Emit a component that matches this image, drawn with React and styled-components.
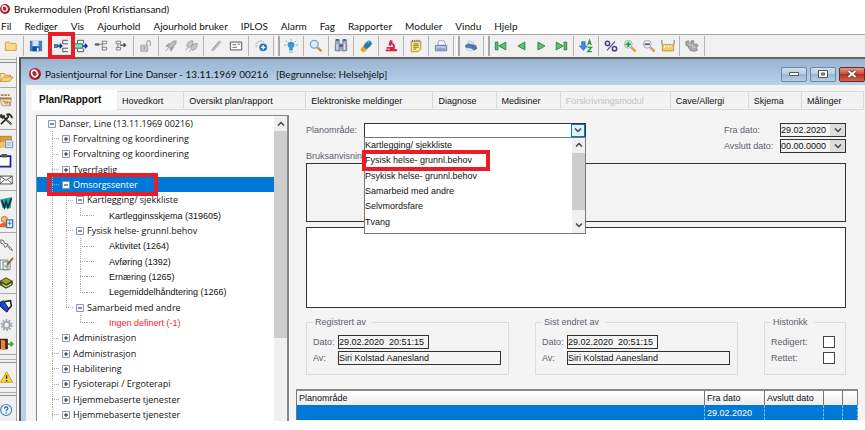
import React from 'react';
import styled, {createGlobalStyle, css} from 'styled-components';

const titleFont = `Lato, 'Open Sans', sans-serif`;
const formFont = `'Liberation Sans', Arial, sans-serif`;
const treeFont = `'Open Sans', 'Noto Sans', sans-serif`;

const GlobalStyle = createGlobalStyle`
  * { box-sizing: border-box; }
  body { margin: 0; background: #fff; font-family: ${formFont}; font-size: 9px; line-height: 14px; color: #111; }
  button, input, select, textarea { font: inherit; color: inherit; margin: 0; padding: 0; border-radius: 0; }
  svg { display: block; flex: none; }
`;

const Page = styled.div`
  display: flex;
  flex-direction: column;
  height: 100vh;
  padding-bottom: 9px;
  overflow: hidden;
`;

const AppTitle = styled.header`
  display: flex;
  align-items: center;
  gap: 4px;
  height: 17px;
  flex: none;
  font: 10px/16px ${titleFont};
`;

const MenuBar = styled.nav`
  display: flex;
  gap: 13px;
  height: 17px;
  flex: none;
  padding-left: 1px;
`;

const MenuItem = styled.button`
  border: 0;
  background: none;
  font: 10px/16px ${titleFont};
  white-space: nowrap;
`;

const ToolBar = styled.div`
  display: flex;
  align-items: center;
  height: 23px;
  flex: none;
  padding-left: 1px;
  background: #f0f0f0;
  border-top: 1px solid #a6a6a6;
`;

const ToolButton = styled.button`
  position: relative;
  display: flex;
  align-items: center;
  justify-content: center;
  width: ${p => (p.$narrow ? 19 : 20)}px;
  height: 20px;
  border: 0;
  background: none;
`;

const ToolSep = styled.span`
  width: 5px;
  height: 20px;
  background: linear-gradient(#b4b4b4, #b4b4b4) 2px 0 / 1px 100% no-repeat;
`;

const ToolGrip = styled.span`
  width: 5px;
  height: 20px;
  border-left: 1px solid #fff;
  background: linear-gradient(#a8a8a8, #a8a8a8) 1px 0 / 2px 100% no-repeat;
`;

// red frame drawn over the control it points at
const Mark = styled.span`
  position: absolute;
  z-index: 3;
  inset: ${p => p.$inset};
  border: 4px solid #ec1c24;
  pointer-events: none;
`;

const Workspace = styled.main`
  display: flex;
  flex: 1;
  min-height: 0;
`;

const SideBar = styled.aside`
  display: flex;
  flex-direction: column;
  width: 17px;
  flex: none;
  overflow: hidden;
  background: #f0f0f0;
  border-right: 1px solid #a0a0a0;
`;

const SideButton = styled.button`
  display: flex;
  align-items: center;
  width: 16px;
  height: 19px;
  flex: none;
  border: 0;
  background: none;
`;

const SideSep = styled.span`
  height: 4px;
  flex: none;
  background: linear-gradient(#a8a8a8, #a8a8a8) 0 1px / 100% 1px no-repeat;
`;

const SideGrip = styled.span`
  height: 10px;
  flex: none;
  background:
    linear-gradient(#b0b0b0, #b0b0b0) 0 2px / 100% 1px no-repeat,
    linear-gradient(#909090, #909090) 0 5px / 100% 1px no-repeat;
`;

const JournalWindow = styled.section`
  display: flex;
  flex-direction: column;
  flex: 1;
  min-width: 0;
  margin-left: 2px;
  border-top: 2px solid #666;
  border-left: 2px solid #555;
`;

const JournalTitle = styled.header`
  display: flex;
  align-items: center;
  gap: 4px;
  height: 26px;
  flex: none;
  padding: 4px 0 0 8px;
  background: linear-gradient(#99b4d1, #b9d1ea);
  font: 10px/16px ${titleFont};
  white-space: pre;
`;

const WindowButtons = styled.div`
  display: flex;
  gap: 3px;
  margin-left: auto;
`;

const WindowButton = styled.button`
  display: flex;
  align-items: center;
  justify-content: center;
  width: 26px;
  height: 15px;
  border: 1px solid ${p => (p.$close ? '#6b2a26' : '#6d86a3')};
  border-radius: 2px;
  background: ${p => (p.$close
    ? 'linear-gradient(#dd9a8c, #c9503c 45%, #b5301c 50%, #cc6750)'
    : 'linear-gradient(#cfdeee, #b8cce2 45%, #9db6d2 50%, #b9cde3)')};
`;

const JournalBody = styled.div`
  display: flex;
  flex-direction: column;
  flex: 1;
  min-height: 0;
  padding: 5px 1px 0 6px;
  border-left: 5px solid #b9d1ea;
  background: #f4f4f4;
`;

const Tabs = styled.div`
  display: flex;
  align-items: flex-end;
  height: 20px;
  flex: none;
`;

const Tab = styled.button`
  flex: ${p => `${p.$size} ${p.$size} ${p.$size}px`};
  min-width: 0;
  height: 19px;
  padding: 0 5px;
  border: 1px solid #dadada;
  border-left: 0;
  background: #f2f2f2;
  text-align: left;
  white-space: nowrap;
  color: ${p => (p.disabled ? '#c4c4c4' : '#111')};
  ${p => p.$active && css`
    height: 20px;
    padding: 0 7px;
    background: #fff;
    border-color: #fff;
    font-weight: bold;
    font-size: 10px;
  `}
`;

const Columns = styled.div`
  display: flex;
  flex: 1;
  min-height: 0;
  padding: 5px 0 0 4px;
`;

const TreePanel = styled.div`
  display: flex;
  width: 253px;
  flex: none;
  border: 1px solid #828790;
  border-bottom: 0;
  border-right-width: 2px;
  background: #fff;
`;

const TreeList = styled.ul`
  display: grid;
  grid-template-rows: repeat(7, 15px 15px 16px);
  flex: 1;
  margin: 0;
  padding: 0;
  overflow: hidden;
  list-style: none;
`;

const TreeRow = styled.li`
  position: relative;
  display: flex;
  align-items: center;
  padding-left: 8px;
  white-space: pre;
  font-family: ${p => (p.$leaf ? formFont : treeFont)};
  background: ${p => (p.$selected ? '#0078d7' : 'transparent')};
  color: ${p => (p.$selected ? '#fff' : p.$alert ? '#ff1a1a' : '#111')};
`;

const dotsDown = 'repeating-linear-gradient(#aaa 0 1px, transparent 1px 2px)';
const dotsAcross = 'repeating-linear-gradient(90deg, #aaa 0 1px, transparent 1px 2px)';

const Guide = styled.span`
  align-self: stretch;
  width: 14px;
  flex: none;
  background:
    ${dotsDown} 7px 0 / 1px ${p => (p.$end ? '50%' : '100%')} no-repeat
    ${p => p.$elbow && css`, ${dotsAcross} 7px 50% / 7px 1px no-repeat`};
  ${p => p.$blank && 'background: none;'}
`;

const LeafLine = styled.span`
  align-self: stretch;
  width: 22px;
  flex: none;
  background: ${dotsAcross} 0 50% / 8px 1px no-repeat;
`;

const Toggle = styled.button`
  display: flex;
  align-items: center;
  justify-content: center;
  width: 14px;
  height: 14px;
  flex: none;
  border: 0;
  background: none;
`;

const ScrollBar = styled.div`
  display: flex;
  flex-direction: column;
  width: 13px;
  flex: none;
  background: #f0f0f0;
`;

const ScrollArrow = styled.button`
  display: flex;
  align-items: center;
  justify-content: center;
  height: 15px;
  flex: none;
  border: 0;
  background: #f0f0f0;
`;

const ScrollThumb = styled.span`
  flex: ${p => p.$size} 1 0;
  background: #cdcdcd;
`;

const ScrollRest = styled.span`
  flex: ${p => p.$size} 1 0;
`;

const Detail = styled.div`
  display: flex;
  flex-direction: column;
  flex: 1;
  min-width: 0;
  padding: 8px 6px 0 7px;
`;

const DetailForm = styled.form`
  display: flex;
  flex-direction: column;
  padding: 0 12px 0 10px;
`;

const FormHead = styled.div`
  display: flex;
  justify-content: space-between;
  height: 40px;
`;

const HeadLeft = styled.div`
  display: flex;
  flex-direction: column;
  justify-content: space-between;
`;

const Field = styled.div`
  display: flex;
  align-items: center;
  height: 14px;
`;

const Label = styled.label`
  width: ${p => p.$width ? `${p.$width}px` : 'auto'};
  flex: none;
  color: #5c6270;
  white-space: nowrap;
`;

const Combo = styled.div`
  position: relative;
  display: flex;
  width: 222px;
  height: 15px;
  border: 1px solid #333;
  background: #fff;
`;

const ComboSelect = styled.select`
  flex: 1;
  appearance: none;
  border: 0;
  background: #fff;
  outline: 0;
`;

const ComboArrow = styled.button`
  display: flex;
  align-items: center;
  justify-content: center;
  width: 14px;
  border: 1px solid #0078d7;
  background: #e5f1fb;
`;

const ComboList = styled.div`
  position: absolute;
  z-index: 2;
  top: 13px;
  left: -1px;
  right: -1px;
  display: flex;
  border: 1px solid #777;
  background: #fff;
`;

const Options = styled.ul`
  display: grid;
  grid-template-rows: repeat(2, 15px 15px 16px);
  flex: 1;
  margin: 0;
  padding: 0 0 3px;
  list-style: none;
`;

const Option = styled.li`
  position: relative;
  display: flex;
  align-items: center;
`;

const DateFields = styled.div`
  display: grid;
  grid-auto-rows: 14px;
  gap: 2px;
  align-content: start;
`;

const DateBox = styled.div`
  display: flex;
  width: 66px;
  height: 14px;
  border: 1px solid #333;
`;

const DateInput = styled.input`
  flex: 1;
  width: 0;
  border: 0;
  background: #f4f4f4;
`;

const DateArrow = styled.button`
  display: flex;
  align-items: center;
  justify-content: center;
  width: 15px;
  border: 0;
  background: #dcdcdc;
`;

const TextBox = styled.textarea`
  display: block;
  width: 100%;
  height: ${p => (p.$tall ? 81 : 59)}px;
  margin-bottom: ${p => (p.$tall ? 7 : 5)}px;
  border: 1px solid #333;
  background: ${p => (p.readOnly ? '#f3f3f3' : '#fff')};
  resize: none;
`;

const Groups = styled.div`
  display: flex;
  justify-content: space-between;
`;

const Group = styled.fieldset`
  display: grid;
  grid-auto-rows: 14px;
  gap: 2px;
  width: ${p => (p.$small ? 82 : 203)}px;
  min-width: 0;
  height: 60px;
  margin: 0;
  padding: 6px 7px 0 6px;
  border: 1px solid #dcdcdc;
`;

const Legend = styled.legend`
  padding: 0 6px 0 2px;
  color: #5c6270;
`;

const ValueInput = styled.input`
  width: ${p => (p.$short ? '91px' : 'auto')};
  flex: ${p => (p.$short ? 'none' : 1)};
  min-width: 0;
  height: 14px;
  border: 1px solid #333;
  background: #f4f4f4;
`;

const CheckBox = styled.input`
  appearance: none;
  width: 12px;
  height: 12px;
  margin-left: auto;
  margin-right: 3px;
  border: 1px solid #444;
  background: #fff;
`;

const PlanTable = styled.table`
  width: 100%;
  margin-top: 14px;
  border-collapse: collapse;
  table-layout: fixed;
  border-top: 2px solid #888;
  border-left: 1px solid #777;
`;

const HeadCell = styled.th`
  width: ${p => (p.$width ? `${p.$width}px` : 'auto')};
  height: 15px;
  padding: 0 2px;
  border-right: 1px solid #777;
  background: linear-gradient(#fff, #ececec);
  font-weight: normal;
  text-align: left;
  white-space: nowrap;
`;

const BodyCell = styled.td`
  height: 15px;
  padding: 0 2px;
  border-right: 1px dashed #7db8ea;
  background: #0078d7;
  color: #fff;
`;

const icons = {
  folder: <path d="M1.500 4.500q0-1 1-1h3l1.500 1.500h6q1 0 1 1v7h-12.500z" fill="#f8dc8c" stroke="#c9973a" />,
  disk: <><path d="M1 2h14v12h-14z" fill="#3f7fd0" /><path d="M4 2h7v6h-7z" fill="#d3e6f8" /><path d="M4 9h8v5h-8z" fill="#174b96" /><path d="M9 10h2v4h-2z" fill="#fff" /></>,
  insert: <><path d="M0 6.500h4v3h-4z" fill="#2bb5a8" stroke="#145a55" /><path d="M4 8h4.500M6.500 5.500l2.500 2.500-2.500 2.500" stroke="#1b1bb5" fill="none" strokeWidth="1.500" /><path d="M16 1.500h-6v4h6M16 10.500h-6v4h6" stroke="#444" fill="none" /></>,
  move: <><path d="M11 5v-3.500h-7v3.500M11 11v3.500h-7v-3.500" stroke="#444" fill="none" /><path d="M0 5.500h10v5h-10z" fill="#7fe0d2" stroke="#165" /><path d="M10 8h5M12.500 5.500l2.500 2.500-2.500 2.500" stroke="#1b1bb5" fill="none" strokeWidth="1.500" /></>,
  branch: <><path d="M1 5h5v2.500h-5z" fill="#555" /><path d="M6 6h3M9.500 2v11M9.500 2.500h5v3h-5M9.500 9.500h5v3h-5" stroke="#777" fill="none" /></>,
  branchOut: <><path d="M2.500 2.500h5v3h-5zM2.500 9.500h5v3h-5zM4.500 5v5" fill="none" stroke="#777" /><path d="M7 7h7M11 5l2 2-2 2" fill="none" stroke="#444" strokeWidth="1.500" /></>,
  lock: <><path d="M2 7h8v7h-8z" fill="#c8c8c8" stroke="#a0a0a0" /><path d="M9 7v-3q0-2 2-2t2 2v4" fill="none" stroke="#b0b0b0" strokeWidth="1.500" /><path d="M6 9v3" stroke="#888" /></>,
  rocket: <><path d="M14 2q-6 0-9 7l2 2q7-3 7-9z" fill="#bbb" stroke="#999" /><path d="M6 5l-4 3 3 1zM11 9l-3 5-1-3zM5 10l-3 4" fill="#aaa" stroke="#999" /></>,
  rockets: <><path d="M10 2q-6 0-7 6l2 2q6-2 5-8zM15 5q-6 0-7 6l2 2q6-2 5-8z" fill="#c4c4c4" stroke="#999" /><path d="M4 10l-2 3M8 12l-2 3" stroke="#999" /></>,
  pen: <><path d="M13 2l-9 9-1 3 3-1 8-9z" fill="#bbb" /><path d="M12 2l-9 11" stroke="#8b8b8b" /></>,
  card: <><path d="M1.500 3.500h13v9h-13z" fill="#fff" stroke="#444" /><path d="M4 6.500h4M4 9.500h5M10 6h2.500" stroke="#555" /></>,
  cloud: <><path d="M3 9q-2-5 3-6 3-2 5 1" fill="none" stroke="#b8c7d6" strokeWidth="2" strokeDasharray="2 1" /><circle cx="10.500" cy="9.500" r="4.500" fill="#2a77bd" /><path d="M10.500 7v5M8 9.500h5" stroke="#fff" strokeWidth="1.500" /></>,
  bulb: <><path d="M8 3q4 0 4 3.500 0 2-2 3.500v3h-4v-3q-2-1.500-2-3.500 0-3.500 4-3.500z" fill="#3a97cf" /><path d="M8 0v2M2 2l1.500 1.500M14 2l-1.500 1.500M0 7h2.500M13.500 7h2.500M6 15h4" stroke="#5aafd9" /></>,
  search: <><path d="M9.500 9.500l5 4.500" stroke="#c98b3c" strokeWidth="2.500" /><circle cx="6" cy="6" r="4.500" fill="#d5ecfb" stroke="#7aa5c9" strokeWidth="1.500" /></>,
  binoculars: <><path d="M2 1.500h4v3l1 1v8h-5.500v-8l.5-1zM10 1.500h4v3l.5 1v8h-5.500v-8l1-1z" fill="#a5b1c4" stroke="#63738d" /><path d="M6 6h4v3h-4z" fill="#4a5b78" /><path d="M3.500 6v6M12 6v6" stroke="#eef2f8" /><path d="M2 1h4M10 1h4" stroke="#2c66b5" strokeWidth="2" /></>,
  pill: <><path d="M5 12l6-6" stroke="#f0a32b" strokeWidth="6" strokeLinecap="round" /><path d="M8.500 8l3-3" stroke="#247bb8" strokeWidth="6" strokeLinecap="round" /><path d="M10 4l2-1" stroke="#8cc7ec" strokeWidth="1.500" /></>,
  microscope: <><path d="M7 1l3 1-2 6-3-1z" fill="#dd1f3d" /><path d="M9 4q5 2 3 7l3 1v2h-13v-2h5v-1h-4v-2h7q1-3-2-3z" fill="#dd1f3d" /></>,
  note: <><path d="M2.500 2.500h11v9l-3 3h-8z" fill="#f6e585" stroke="#a58b32" /><path d="M4 1v2M6.500 1v2M9 1v2M11.500 1v2" stroke="#555" /><path d="M5 5.500h6M5 7.500h6M5 9.500h6M5 11.500h3" stroke="#7c7233" /></>,
  printer: <><path d="M4 7l1.500-5h6l2 5z" fill="#fff" stroke="#8c9bb5" /><path d="M1.500 7.500h13v6h-13z" fill="#b3c7e6" stroke="#5c77a8" /><path d="M3 11.500h10" stroke="#5c77a8" /></>,
  printBlue: <><path d="M5 2l6 2v3h-7z" fill="#dce7f5" stroke="#8aa" strokeWidth=".5" /><path d="M1 7l4-2 9 2 1 4-3 2-10-3z" fill="#4f74b5" /><path d="M4 10l6 1.500-1 2.500-6-2z" fill="#e9eff9" stroke="#8aa" strokeWidth=".5" /></>,
  first: <path d="M1.500 3.500h3v9h-3zM13.500 3.500v9l-8-4.500z" fill="#62bd76" stroke="#23843a" />,
  prev: <path d="M12.500 3.500v9l-8-4.500z" fill="#62bd76" stroke="#23843a" />,
  next: <path d="M4.500 3.500v9l8-4.500z" fill="#62bd76" stroke="#23843a" />,
  last: <path d="M11.500 3.500h3v9h-3zM2.500 3.500v9l8-4.500z" fill="#62bd76" stroke="#23843a" />,
  sort: <><path d="M3 3h4v5h2.500l-4.500 5-4.500-5h2.500z" fill="#3e8be0" stroke="#1f62b5" strokeWidth=".7" /><path d="M10 7l2-5.500 2 5.500M10.700 5h2.800M10 9.500h4.500l-4.500 5h4.500" fill="none" stroke="#259a2d" strokeWidth="1.500" /></>,
  percent: <><path d="M12.500 3l-9 10" stroke="#5b4a80" strokeWidth="1.300" /><circle cx="4" cy="5" r="2.500" fill="none" stroke="#4f3c7a" strokeWidth="1.700" /><circle cx="12" cy="11" r="2.500" fill="none" stroke="#4f3c7a" strokeWidth="1.700" /></>,
  zoomIn: <><path d="M9.500 9.500l5 5" stroke="#e89a42" strokeWidth="2.800" /><circle cx="6" cy="6" r="4.500" fill="#d9f0e0" stroke="#86b5b8" /><path d="M6 3v6M3 6h6" stroke="#1e9b33" strokeWidth="2" /></>,
  zoomOut: <><path d="M9.500 9.500l5 5" stroke="#e89a42" strokeWidth="2.800" /><circle cx="6" cy="6" r="4.500" fill="#dcecf8" stroke="#8badcc" /><path d="M3 6h6" stroke="#b64040" strokeWidth="2" /></>,
  ruler: <><path d="M1 1v5M15 1v5" stroke="#46658f" /><path d="M1.500 6.500h13v7h-13z" fill="#f0cd66" stroke="#bb8e2d" /><path d="M4 7v3M6.500 7v2M9 7v3M11.500 7v2" stroke="#fff" /></>,
  puzzle: <><path d="M1 3l3-1 1 3 2 0v-3h3v4h4l1 2-2 2 1 3-3 1-5-1-3-5-2-1z" fill="#a9a9a9" stroke="#858585" /><path d="M6 7h3M8 9l4 1M5 5v2" stroke="#d8d8d8" /></>,
  openFolder: <><path d="M0 13v-9h5l1 2h6v2" fill="#fbe2a0" stroke="#c58b2c" /><path d="M0 13l4-5h11l-4 5z" fill="#f9d27a" stroke="#c58b2c" /></>,
  drawer: <><path d="M0 5.500h13l-1 9h-10z" fill="#f2e2bd" stroke="#b59a66" /><path d="M1 2.500h3M5 2.500h3M9 2.500h2M0 6.500h13" stroke="#a88145" strokeWidth="2" /><path d="M3 9.500h3v3M8 9v4M8 10.500h3v3" stroke="#96794a" fill="none" /></>,
  tools: <><path d="M1 14l9-9M3 5l10 9" stroke="#222" strokeWidth="2" /><path d="M7 2q6-2 8 5l-2 0-2-3-3 1zM0 3l2-1 1 2 2-1 1 2-3 3-3-2z" fill="#333" /><path d="M8 9l5 5" stroke="#c9a23a" /></>,
  copy: <><path d="M0 1.500h13v12h-13z" fill="#d9a032" stroke="#b17c1d" /><path d="M0 8h6v6h-6z" fill="#efc25c" /><path d="M6.500 5.500h6l2 2v7h-8z" fill="#dbe8f8" stroke="#6b86ad" /><path d="M8 9h5M8 11.500h5" stroke="#8ba3c4" /></>,
  clipboard: <><path d="M-1 2.500h13v12h-13z" fill="#fff" stroke="#201f9b" strokeWidth="2" /><path d="M2 0h6v4h-6z" fill="#555" /></>,
  mail: <path d="M0 3.500h14v9h-14zM0 3.500l7 5 7-5M0 12.500l5-5M14 12.500l-5-5" fill="#fff" stroke="#444" />,
  word: <><path d="M0 4l14-3-2 13-9 0z" fill="#25a8a0" /><path d="M2 5l3 8 2-7 2 7 4-10" fill="none" stroke="#112a3a" strokeWidth="1.800" /></>,
  person: <><circle cx="5" cy="5" r="3.500" fill="#f2b877" stroke="#c26a2c" /><path d="M0 14v-3q2-3 7-2v5z" fill="#e0672c" /><path d="M7.500 5.500h7v9h-7z" fill="#e2effa" stroke="#3f78a8" strokeWidth="1.500" /><path d="M11 7v5M9 9.500h4" stroke="#3f78a8" /></>,
  pin: <path d="M1 2l3 1 1 3 4 1-1 2-2 2-2-4-3-1zM8 9l2 0 3 3 1 3M9 10l4 4" fill="#fff" stroke="#555" />,
  checklist: <><path d="M0 3.500h9v11h-9zM3.500 5.500h8v9h-8z" fill="#e4efee" stroke="#6b7d7c" /><path d="M5 9l2 3 3-5" stroke="#5b8f86" fill="none" /><path d="M15 1l-7 8" stroke="#a1602d" strokeWidth="2" /></>,
  book: <><path d="M0 6l7-4 7 4-7 4z" fill="#a5a02e" stroke="#333a10" /><path d="M0 6v4l7 4 7-4v-4l-7 4z" fill="#5d6319" stroke="#333a10" /><path d="M3 9.500l4 2.500 6-3" stroke="#fff" fill="none" /></>,
  notebook: <><path d="M5 3l7-1 1 6-5 5" fill="#fff" stroke="#223" strokeWidth="1.800" /><path d="M0 4l4-2 6 9-2 4-4-3-4-4z" fill="#1f45e0" stroke="#112" /></>,
  gear: <><circle cx="7.500" cy="8" r="5.500" fill="none" stroke="#a0a6ae" strokeWidth="2.500" strokeDasharray="2 1.450" /><circle cx="7.500" cy="8" r="3.500" fill="none" stroke="#a0a6ae" strokeWidth="2" /></>,
  door: <><path d="M0 2h9v12h-9z" fill="#3b2412" /><path d="M1 3l5 1v11l-5-1z" fill="#e08a38" /><path d="M9 8h5M12 5.500l2.500 2.500-2.500 2.500" fill="none" stroke="#3aa335" strokeWidth="2" /></>,
  warning: <><path d="M7.500 2l7 12h-14z" fill="#fdd32c" stroke="#c99a13" /><path d="M7.500 6v4M7.500 11.500v1.500" stroke="#222" strokeWidth="1.500" /></>,
  help: <><circle cx="7" cy="8" r="6.300" fill="#eef6fc" stroke="#4283b5" strokeWidth="1.300" /><path d="M5 6.500q0-2 2-2t2 1.700q0 1-1 1.600t-1 1.500M7 10.500v1.500" fill="none" stroke="#245f92" strokeWidth="1.400" /></>,
};

const Icon = ({name, size = 14}) => (
  <svg width={size} height={size} viewBox="0 0 16 16" fill="none" aria-hidden="true">{icons[name]}</svg>
);

const Logo = ({size}) => (
  <svg width={size} height={size} viewBox="0 0 12 12" aria-hidden="true">
    <circle cx="6" cy="6" r="6" fill="#b5202a" />
    <ellipse cx="5.500" cy="5.500" rx="2.800" ry="3.400" fill="#b5202a" stroke="#fff" strokeWidth="1.600" transform="rotate(-30 5.500 5.500)" />
    <path d="M6.500 10.500q4 0 4.500-4" stroke="#6e1218" fill="none" />
  </svg>
);

const Chevron = ({up}) => (
  <svg width="8" height="6" viewBox="0 0 8 6" aria-hidden="true">
    <path d={up ? 'M1 4.500l3-3 3 3' : 'M1 1.500l3 3 3-3'} fill="none" stroke="#444" strokeWidth="1.500" />
  </svg>
);

const ExpandBox = ({open}) => (
  <svg width="8" height="8" viewBox="0 0 8 8" aria-hidden="true">
    <path d="M.5.5h7v7h-7z" fill="#f4f7fb" stroke="#8a9ab0" />
    <path d={open ? 'M2 4h4' : 'M2 4h4M4 2v4'} stroke="#223" />
  </svg>
);

const menus = ['Fil', 'Rediger', 'Vis', 'Ajourhold', 'Ajourhold bruker', 'IPLOS', 'Alarm', 'Fag', 'Rapporter', 'Moduler', 'Vindu', 'Hjelp'];

const tools = [
  'folder', '|', 'disk', '|', 'insert', 'move', 'branch', 'branchOut', '|', 'lock', '|', 'rocket', 'rockets', '|',
  'pen', 'card', '|', 'cloud', '|', '#', 'bulb', '|', 'search', '|', 'binoculars', '|', 'pill', '|', 'microscope', '|',
  'note', '|', 'printer', '|', '#', 'printBlue', '|', '#', 'first', 'prev', 'next', 'last', '|', 'sort', '|',
  'percent', 'zoomIn', 'zoomOut', 'ruler', '|', 'puzzle', '|',
];
const narrowTools = ['percent', 'zoomIn', 'zoomOut', 'ruler'];

const sideTools = [
  '#', 'openFolder', '|', 'drawer', 'tools', '|', 'copy', 'clipboard', 'mail', '|', 'word', 'person', '|',
  'pin', 'checklist', 'book', '|', 'notebook', 'gear', 'door', '|', '#', 'warning', '|', '#', 'help',
];

const tabs = [
  {name: 'Plan/Rapport', size: 85, active: true},
  {name: 'Hovedkort', size: 67},
  {name: 'Oversikt plan/rapport', size: 122},
  {name: 'Elektroniske meldinger', size: 127},
  {name: 'Diagnose', size: 63},
  {name: 'Medisiner', size: 64},
  {name: 'Forskrivningsmodul', size: 110, disabled: true},
  {name: 'Cave/Allergi', size: 78},
  {name: 'Skjema', size: 53},
  {name: 'Målinger', size: 62},
];

const tree = [
  {text: 'Danser, Line (13.11.1969 00216)', level: 0, open: true},
  {text: 'Forvaltning og koordinering', level: 1},
  {text: 'Forvaltning og koordinering', level: 1},
  {text: 'Tverrfaglig', level: 1},
  {text: 'Omsorgssenter', level: 1, open: true, selected: true},
  {text: 'Kartlegging/ sjekkliste', level: 2, open: true},
  {text: 'Kartlegginsskjema (319605)', level: 3, last: true},
  {text: 'Fysisk helse- grunnl.behov', level: 2, open: true},
  {text: 'Aktivitet (1264)', level: 3},
  {text: 'Avføring (1392)', level: 3},
  {text: 'Ernæring (1265)', level: 3},
  {text: 'Legemiddelhåndtering (1266)', level: 3, last: true},
  {text: 'Samarbeid med andre', level: 2, open: true, last: true},
  {text: 'Ingen definert (-1)', level: 3, last: true, alert: true, closing: true},
  {text: 'Administrasjon', level: 1},
  {text: 'Administrasjon', level: 1},
  {text: 'Habilitering', level: 1},
  {text: 'Fysioterapi / Ergoterapi', level: 1},
  {text: 'Hjemmebaserte tjenester', level: 1},
  {text: 'Hjemmebaserte tjenester', level: 1},
];

const areas = ['Kartlegging/ sjekkliste', 'Fysisk helse- grunnl.behov', 'Psykisk helse- grunnl.behov', 'Samarbeid med andre', 'Selvmordsfare', 'Tvang'];

const TreeNode = ({node}) => {
  const leaf = node.level === 3;
  return (
    <TreeRow $leaf={leaf} $selected={node.selected} $alert={node.alert} role="treeitem" aria-selected={!!node.selected}>
      {Array.from({length: node.level}, (_, i) => (
        <Guide
          key={i}
          $elbow={i === node.level - 1}
          $end={i === node.level - 1 && node.last}
          $blank={node.closing && i === 1}
        />
      ))}
      {leaf ? <LeafLine /> : (
        <Toggle aria-label={node.open ? 'Lukk' : 'Åpne'}><ExpandBox open={node.open} /></Toggle>
      )}
      {node.text}
      {node.selected && <Mark $inset="-4px 116px -4px 10px" />}
    </TreeRow>
  );
};

const ChangeGroup = ({id, title}) => (
  <Group>
    <Legend>{title}</Legend>
    <Field>
      <Label $width={25} htmlFor={`${id}-dato`}>Dato:</Label>
      <ValueInput id={`${id}-dato`} $short readOnly value="29.02.2020  20:51:15" />
    </Field>
    <Field>
      <Label $width={25} htmlFor={`${id}-av`}>Av:</Label>
      <ValueInput id={`${id}-av`} readOnly value="Siri Kolstad Aanesland" />
    </Field>
  </Group>
);

const DateField = ({id, label, value}) => (
  <Field>
    <Label $width={56} htmlFor={id}>{label}</Label>
    <DateBox>
      <DateInput id={id} defaultValue={value} />
      <DateArrow type="button" aria-label={label}><Chevron /></DateArrow>
    </DateBox>
  </Field>
);

const App = () => (
  <Page>
    <GlobalStyle />
    <AppTitle><Logo size={10} />Brukermodulen (Profil Kristiansand)</AppTitle>
    <MenuBar>
      {menus.map(name => <MenuItem key={name}>{name}</MenuItem>)}
    </MenuBar>
    <ToolBar>
      {tools.map((name, i) => {
        if (name === '|') return <ToolSep key={i} />;
        if (name === '#') return <ToolGrip key={i} />;
        return (
          <ToolButton key={i} $narrow={narrowTools.includes(name)} aria-label={name}>
            <Icon name={name} />
            {name === 'insert' && <Mark $inset="-4px -4px -3px -3px" />}
          </ToolButton>
        );
      })}
    </ToolBar>

    <Workspace>
      <SideBar>
        {sideTools.map((name, i) => {
          if (name === '|') return <SideSep key={i} />;
          if (name === '#') return <SideGrip key={i} />;
          return <SideButton key={i} aria-label={name}><Icon name={name} /></SideButton>;
        })}
      </SideBar>

      <JournalWindow>
        <JournalTitle>
          <Logo size={12} />
          {'Pasientjournal for Line Danser - 13.11.1969 00216   [Begrunnelse: Helsehjelp]'}
          <WindowButtons>
            <WindowButton aria-label="Minimer">
              <svg width="10" height="5"><path d="M.5.5h9v3h-9z" fill="#fff" stroke="#555" /></svg>
            </WindowButton>
            <WindowButton aria-label="Gjenopprett">
              <svg width="10" height="8"><path d="M.5.5h9v7h-9z" fill="#fff" stroke="#555" /><path d="M3.500 3h3v2h-3z" fill="#9db6d2" stroke="#555" /></svg>
            </WindowButton>
            <WindowButton $close aria-label="Lukk">
              <svg width="10" height="8"><path d="M1.500 1l7 6M8.500 1l-7 6" stroke="#5c2a28" strokeWidth="3.500" /><path d="M1.500 1l7 6M8.500 1l-7 6" stroke="#fff" strokeWidth="2" /></svg>
            </WindowButton>
          </WindowButtons>
        </JournalTitle>

        <JournalBody>
          <Tabs role="tablist">
            {tabs.map(tab => (
              <Tab key={tab.name} role="tab" $size={tab.size} $active={tab.active} disabled={tab.disabled}>{tab.name}</Tab>
            ))}
          </Tabs>

          <Columns>
            <TreePanel>
              <TreeList role="tree">
                {tree.map((node, i) => <TreeNode key={i} node={node} />)}
              </TreeList>
              <ScrollBar>
                <ScrollArrow aria-label="Opp"><Chevron up /></ScrollArrow>
                <ScrollThumb $size={207} />
                <ScrollRest $size={83} />
              </ScrollBar>
            </TreePanel>

            <Detail>
              <DetailForm>
                <FormHead>
                  <HeadLeft>
                    <Field>
                      <Label $width={58} htmlFor="area">Planområde:</Label>
                      <Combo>
                        <ComboSelect id="area" defaultValue="">
                          <option value="" />
                          {areas.map(name => <option key={name}>{name}</option>)}
                        </ComboSelect>
                        <ComboArrow type="button" aria-label="Vis liste"><Chevron /></ComboArrow>
                        <ComboList>
                          <Options role="listbox" aria-label="Planområde">
                            {areas.map((name, i) => (
                              <Option key={name} role="option">
                                {name}
                                {i === 1 && <Mark $inset="-3px 82px -3px -3px" />}
                              </Option>
                            ))}
                          </Options>
                          <ScrollBar>
                            <ScrollArrow type="button" aria-label="Opp"><Chevron up /></ScrollArrow>
                            <ScrollThumb $size={57} />
                            <ScrollRest $size={7} />
                            <ScrollArrow type="button" aria-label="Ned"><Chevron /></ScrollArrow>
                          </ScrollBar>
                        </ComboList>
                      </Combo>
                    </Field>
                    <Label htmlFor="guide">Bruksanvisning:</Label>
                  </HeadLeft>
                  <DateFields>
                    <DateField id="from" label="Fra dato:" value="29.02.2020" />
                    <DateField id="to" label="Avslutt dato:" value="00.00.0000" />
                  </DateFields>
                </FormHead>
                <TextBox id="guide" readOnly />
                <TextBox $tall aria-label="Tekst" />
                <Groups>
                  <ChangeGroup id="reg" title="Registrert av" />
                  <ChangeGroup id="edit" title="Sist endret av" />
                  <Group $small>
                    <Legend>Historikk</Legend>
                    <Field>
                      <Label htmlFor="edited">Redigert:</Label>
                      <CheckBox id="edited" type="checkbox" />
                    </Field>
                    <Field>
                      <Label htmlFor="fixed">Rettet:</Label>
                      <CheckBox id="fixed" type="checkbox" />
                    </Field>
                  </Group>
                </Groups>
              </DetailForm>
              <PlanTable>
                <thead>
                  <tr>
                    <HeadCell>Planområde</HeadCell>
                    <HeadCell $width={60}>Fra dato</HeadCell>
                    <HeadCell $width={59}>Avslutt dato</HeadCell>
                    <HeadCell $width={19} />
                    <HeadCell $width={15} />
                  </tr>
                </thead>
                <tbody>
                  <tr>
                    <BodyCell />
                    <BodyCell>29.02.2020</BodyCell>
                    <BodyCell />
                    <BodyCell />
                    <BodyCell />
                  </tr>
                </tbody>
              </PlanTable>
            </Detail>
          </Columns>
        </JournalBody>
      </JournalWindow>
    </Workspace>
  </Page>
);

export default App;
